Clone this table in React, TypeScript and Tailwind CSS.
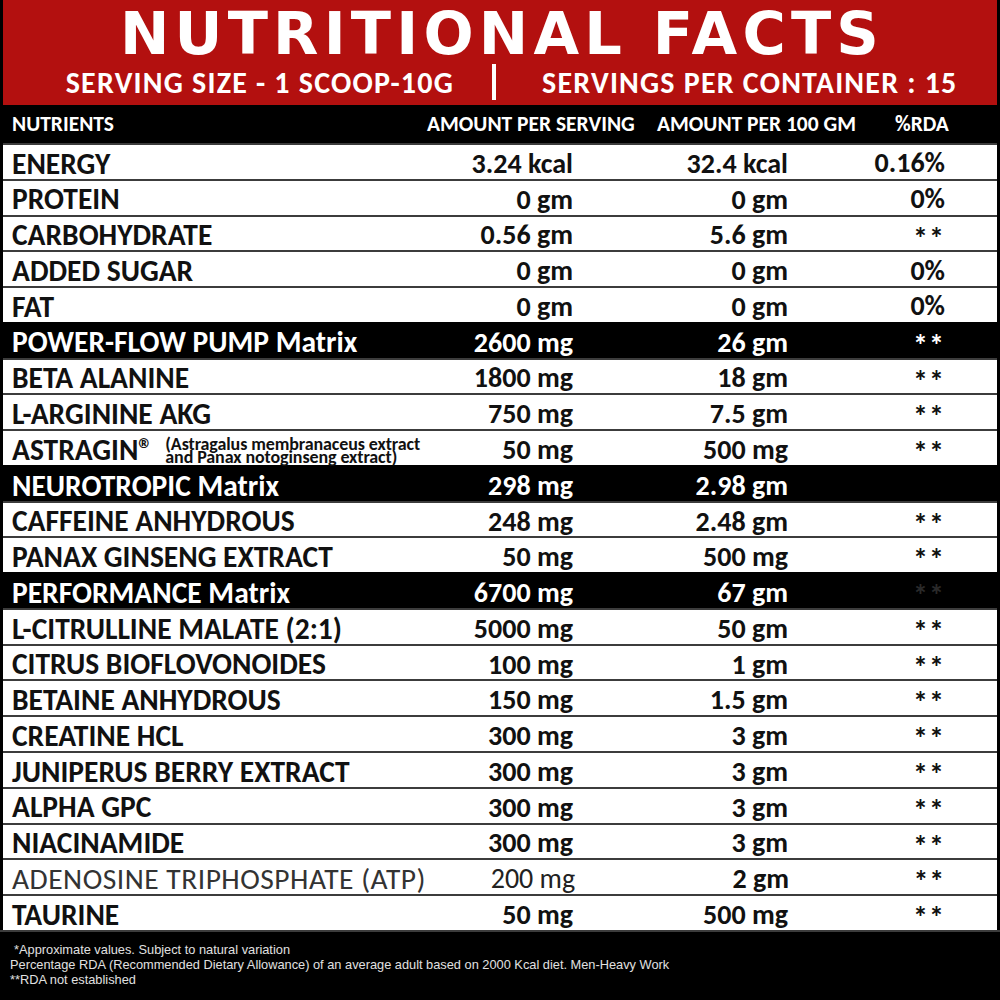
import React from "react";

type Row = {
  name: React.ReactNode;
  s: string;
  g: string;
  r: string;
  dark?: boolean;
  thin?: boolean;
  dimStar?: boolean;
};

const rows: Row[] = [
  { name: "ENERGY", s: "3.24 kcal", g: "32.4 kcal", r: "0.16%" },
  { name: "PROTEIN", s: "0 gm", g: "0 gm", r: "0%" },
  { name: "CARBOHYDRATE", s: "0.56 gm", g: "5.6 gm", r: "**" },
  { name: "ADDED SUGAR", s: "0 gm", g: "0 gm", r: "0%" },
  { name: "FAT", s: "0 gm", g: "0 gm", r: "0%" },
  { name: "POWER-FLOW PUMP Matrix", s: "2600 mg", g: "26 gm", r: "**", dark: true },
  { name: "BETA ALANINE", s: "1800 mg", g: "18 gm", r: "**" },
  { name: "L-ARGININE AKG", s: "750 mg", g: "7.5 gm", r: "**" },
  {
    name: (
      <span className="flex items-center">
        <span>ASTRAGIN®</span>
        <span className="ml-[12px] flex flex-col text-[18px] font-bold leading-[13px] tracking-[-0.1px]">
          <span>(Astragalus membranaceus extract</span>
          <span>and Panax notoginseng extract)</span>
        </span>
      </span>
    ),
    s: "50 mg",
    g: "500 mg",
    r: "**",
  },
  { name: "NEUROTROPIC Matrix", s: "298 mg", g: "2.98 gm", r: "", dark: true },
  { name: "CAFFEINE ANHYDROUS", s: "248 mg", g: "2.48 gm", r: "**" },
  { name: "PANAX GINSENG EXTRACT", s: "50 mg", g: "500 mg", r: "**" },
  { name: "PERFORMANCE Matrix", s: "6700 mg", g: "67 gm", r: "**", dark: true, dimStar: true },
  { name: "L-CITRULLINE MALATE (2:1)", s: "5000 mg", g: "50 gm", r: "**" },
  { name: "CITRUS BIOFLOVONOIDES", s: "100 mg", g: "1 gm", r: "**" },
  { name: "BETAINE ANHYDROUS", s: "150 mg", g: "1.5 gm", r: "**" },
  { name: "CREATINE HCL", s: "300 mg", g: "3 gm", r: "**" },
  { name: "JUNIPERUS BERRY EXTRACT", s: "300 mg", g: "3 gm", r: "**" },
  { name: "ALPHA GPC", s: "300 mg", g: "3 gm", r: "**" },
  { name: "NIACINAMIDE", s: "300 mg", g: "3 gm", r: "**" },
  { name: "ADENOSINE TRIPHOSPHATE (ATP)", s: "200 mg", g: "2 gm", r: "**", thin: true },
  { name: "TAURINE", s: "50 mg", g: "500 mg", r: "**" },
];

function TableRow({ row }: { row: Row }) {
  const dark = row.dark;
  const star = row.r === "**";
  return (
    <div
      className={`flex h-[35.77px] items-center border-t-2 ${
        dark ? "border-black bg-black text-white" : "border-[#3c3c3c] bg-white text-[#111]"
      }`}
    >
      <div
        className={`flex-1 whitespace-nowrap pl-[9px] pt-[5px] text-[29.5px] leading-none ${
          row.thin ? "font-normal tracking-[0.5px] text-[#333]" : "font-bold"
        }`}
      >
        {row.name}
      </div>
      <div
        className={`w-[150px] whitespace-nowrap pt-[4px] text-right text-[28px] leading-none ${
          row.thin ? "font-normal text-[#222]" : "font-bold"
        }`}
      >
        {row.s}
      </div>
      <div className="w-[215px] whitespace-nowrap pt-[4px] text-right text-[28px] font-bold leading-none">
        {row.g}
      </div>
      <div
        className={`w-[157px] whitespace-nowrap text-right font-bold leading-none ${
          star ? "self-start pt-[6px] text-[30px] tracking-[1px]" : "pt-[3px] text-[28px]"
        } ${row.dimStar ? "text-[#2a2a2a]" : ""}`}
      >
        {row.r}
      </div>
      <div className="w-[52px]" />
    </div>
  );
}

export default function App() {
  return (
    <div
      className="h-[1000px] w-[1000px] overflow-hidden bg-black"
      style={{ fontFamily: "Carlito, 'Open Sans', 'Noto Sans', sans-serif" }}
    >
      {/* Red banner */}
      <div className="flex h-[105px] flex-col items-center border-x-[3px] border-black bg-[#b3100f] text-white">
        <div
          className="mt-[9px] h-[50px] pl-[4px] text-[59px] font-bold leading-[50px] tracking-[5.2px]"
          style={{ fontFamily: "'DejaVu Sans', sans-serif" }}
        >
          NUTRITIONAL FACTS
        </div>
        <div className="mt-[5px] flex w-full items-center text-[30px] font-bold leading-[30px] tracking-[1.2px]">
          <div className="w-[489px] pr-[38px] pt-[2px] text-right">SERVING SIZE - 1 SCOOP-10G</div>
          <div className="h-[36px] w-[4px] bg-white" />
          <div className="flex-1 pl-[46px] pt-[2px]">SERVINGS PER CONTAINER : 15</div>
        </div>
      </div>

      {/* Header row */}
      <div className="flex h-[38px] items-center border-x-[3px] border-black bg-black pt-[1px] text-[21.5px] font-bold leading-none text-white">
        <div className="flex-1 pl-[9px]">NUTRIENTS</div>
        <div className="w-[230px] whitespace-nowrap">AMOUNT PER SERVING</div>
        <div className="w-[238px] whitespace-nowrap">AMOUNT PER 100 GM</div>
        <div className="w-[102px] whitespace-nowrap">%RDA</div>
      </div>

      {/* Body */}
      <div className="border-x-[3px] border-black">
        {rows.map((r, i) => (
          <TableRow key={i} row={r} />
        ))}
      </div>

      {/* Footer */}
      <div
        className="border-t-2 border-[#3c3c3c] bg-black pl-[10px] pt-[10px] text-[12.8px] leading-[15px] text-[#e0e0e0]"
        style={{ fontFamily: "'Liberation Sans', Arial, sans-serif" }}
      >
        <div className="pl-[4px]">*Approximate values. Subject to natural variation</div>
        <div>Percentage RDA (Recommended Dietary Allowance) of an average adult based on 2000 Kcal diet. Men-Heavy Work</div>
        <div>**RDA not established</div>
      </div>
    </div>
  );
}
